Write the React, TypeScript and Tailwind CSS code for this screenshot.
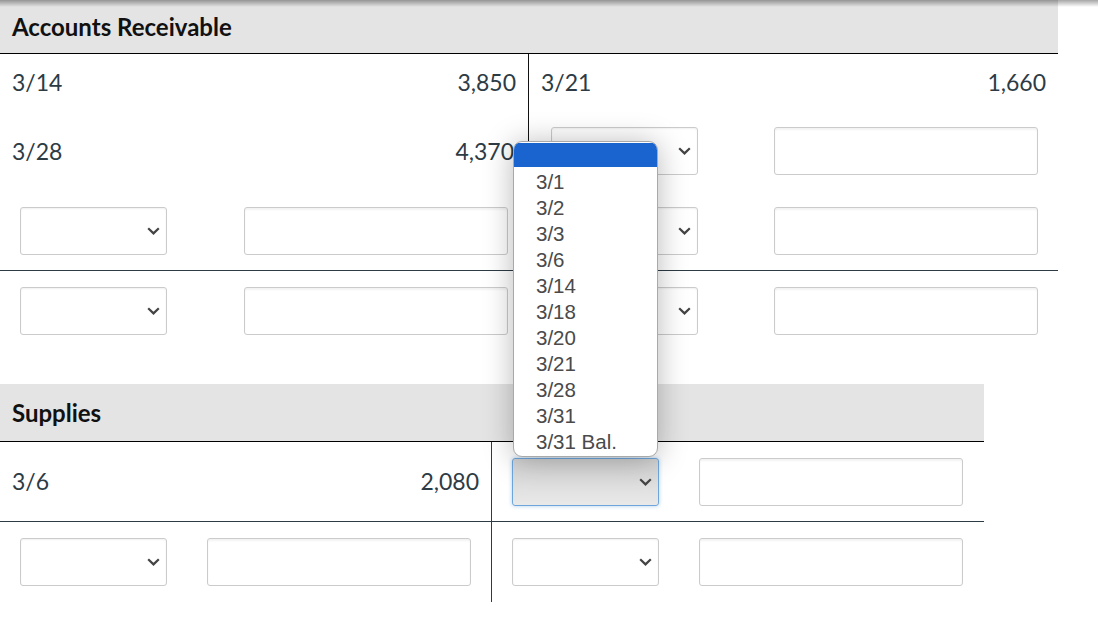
import React from "react";

function Chevron() {
  return (
    <svg width="13" height="8" viewBox="0 0 13 8" className="absolute right-[6px] top-1/2 -translate-y-1/2">
      <polyline points="1.2,1.2 6.5,6.4 11.8,1.2" fill="none" stroke="#444" strokeWidth="2.2" />
    </svg>
  );
}

function Select({ focused = false }: { focused?: boolean }) {
  return (
    <div
      className={
        focused
          ? "relative w-[147px] h-[48px] rounded-[3px] border border-[#6ea6dc] bg-gradient-to-b from-[#d2d2d2] to-[#e9e9e9] shadow-[0_0_4px_rgba(80,150,220,0.45)]"
          : "relative w-[147px] h-[48px] rounded-[3px] border border-[#cbcbcb] bg-white shadow-[inset_0_1px_2px_rgba(0,0,0,0.06)]"
      }
    >
      <Chevron />
    </div>
  );
}

function Input() {
  return (
    <div className="w-[264px] h-[48px] rounded-[3px] border border-[#cbcbcb] bg-white shadow-[inset_0_2px_2px_rgba(0,0,0,0.05)]" />
  );
}

function InputCell({ focused = false, className = "" }: { focused?: boolean; className?: string }) {
  return (
    <div className={"flex items-center justify-between px-5 " + className}>
      <Select focused={focused} />
      <Input />
    </div>
  );
}

function TextCell({ date, amount, className = "" }: { date: string; amount: string; className?: string }) {
  return (
    <div className={"flex items-center justify-between px-3 text-[23px] text-[#2d3b45] " + className}>
      <span>{date}</span>
      <span>{amount}</span>
    </div>
  );
}

const options = ["3/1", "3/2", "3/3", "3/6", "3/14", "3/18", "3/20", "3/21", "3/28", "3/31", "3/31 Bal."];

export default function App() {
  return (
    <div className="relative w-[1098px] h-[628px] bg-white overflow-hidden font-['Lato',sans-serif]">
      <div className="pointer-events-none absolute top-0 left-0 right-0 h-[7px] bg-gradient-to-b from-black/35 to-transparent z-10" />

      <section className="w-[1058px]">
        <div className="h-[54px] bg-[#e4e4e4] border-b border-black flex items-center px-3 text-[24px] font-bold text-[#111]">
          Accounts Receivable
        </div>
        <div className="grid grid-cols-2 h-[57px]">
          <TextCell date="3/14" amount="3,850" className="border-r border-[#111]" />
          <TextCell date="3/21" amount="1,660" />
        </div>
        <div className="grid grid-cols-2 h-[80px]">
          <TextCell date="3/28" amount="4,370" className="border-r border-[#111] pr-[14px]" />
          <InputCell className="pl-[22px]" />
        </div>
        <div className="grid grid-cols-2 h-[80px] border-b border-[#2d3b45]">
          <InputCell className="border-r border-[#2d3b45]" />
          <InputCell className="pl-[22px]" />
        </div>
        <div className="grid grid-cols-2 h-[80px]">
          <InputCell className="border-r border-[#2d3b45]" />
          <InputCell className="pl-[22px]" />
        </div>
      </section>

      <section className="w-[984px] mt-[33px]">
        <div className="h-[58px] bg-[#e4e4e4] border-b border-black flex items-center px-3 text-[24px] font-bold text-[#111]">
          Supplies
        </div>
        <div className="grid grid-cols-2 h-[80px] border-b border-[#2d3b45]">
          <TextCell date="3/6" amount="2,080" className="border-r border-[#2d3b45]" />
          <InputCell focused className="pl-[20px] pr-[21px]" />
        </div>
        <div className="grid grid-cols-2 h-[80px]">
          <InputCell className="border-r border-[#2d3b45]" />
          <InputCell className="pl-[20px] pr-[21px]" />
        </div>
      </section>

      <div className="absolute left-[513px] top-[141px] w-[145px] h-[316px] rounded-[9px] border border-[#a9a9a9] bg-white overflow-hidden shadow-[0_2px_30px_rgba(0,0,0,0.28)] z-20 pt-[1px] font-['Liberation_Sans',Arial,sans-serif]">
        <div className="h-[24px] bg-[#1a64d0]" />
        <div className="mt-[2px]">
          {options.map((o) => (
            <div key={o} className="h-[26px] leading-[26px] pl-[22px] text-[20.5px] text-[#4a4a4a]">
              {o}
            </div>
          ))}
        </div>
      </div>
    </div>
  );
}
